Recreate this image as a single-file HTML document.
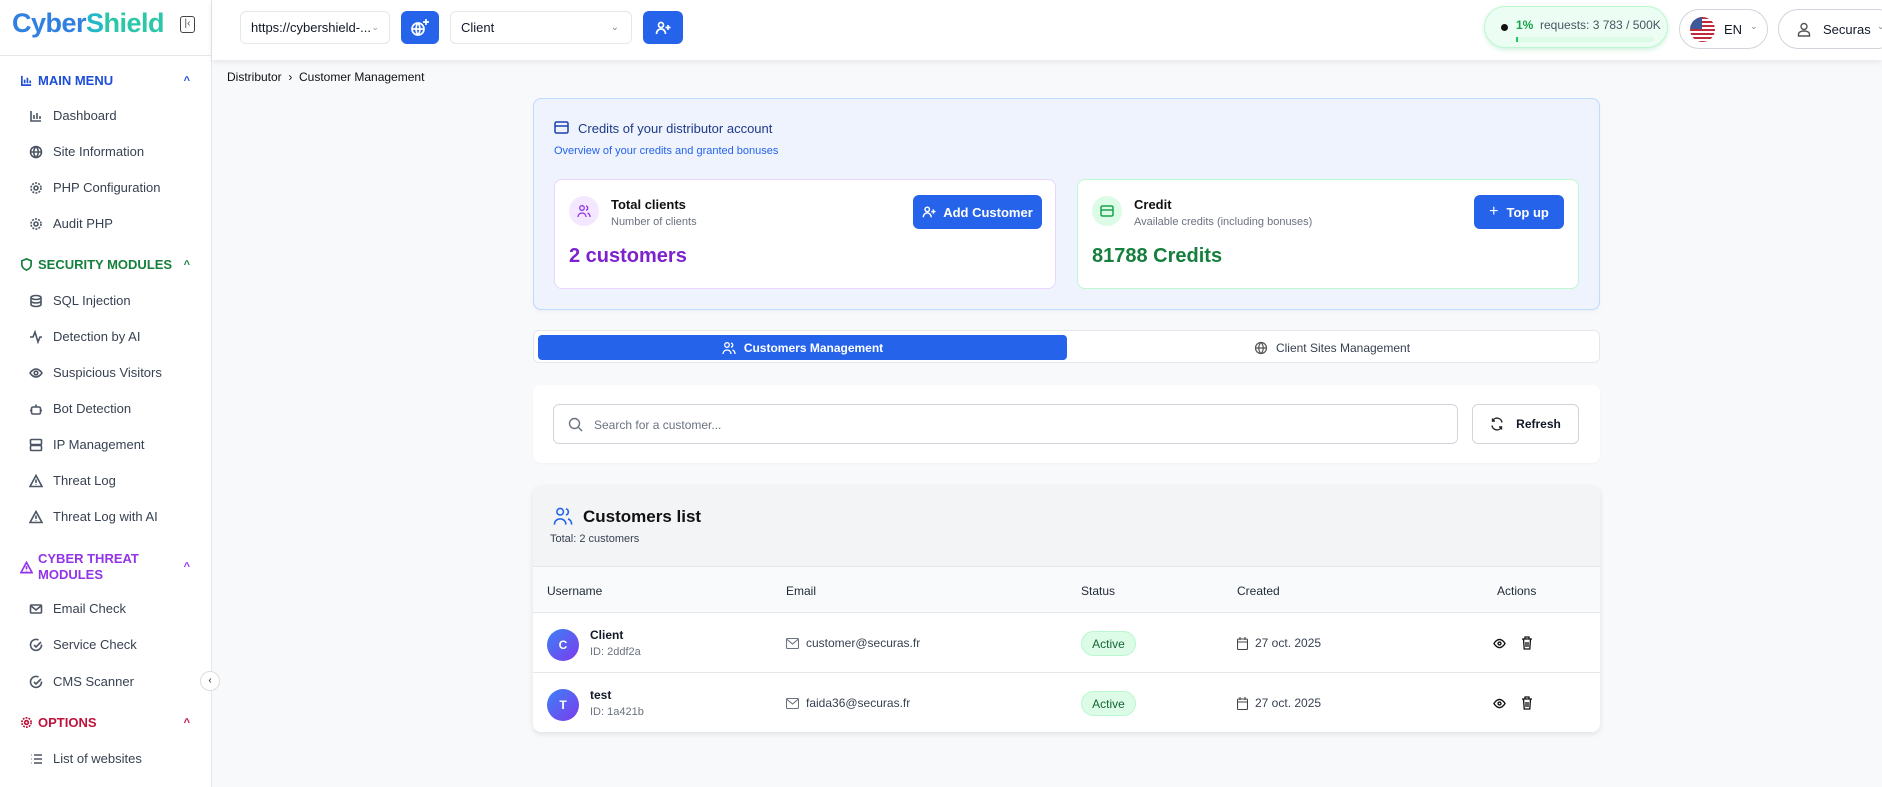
<!DOCTYPE html>
<html><head><meta charset="utf-8"><style>
*{box-sizing:border-box;margin:0;padding:0}
body{width:1882px;height:787px;overflow:hidden;background:#f8f9fb;font-family:"Liberation Sans",sans-serif;color:#111827;position:relative;font-size:13px}
.abs{position:absolute}
.side{left:0;top:0;width:212px;height:787px;background:#fff;border-right:1px solid #e5e7eb}
.si{position:absolute;left:29px;font-size:13px;color:#374151;display:flex;align-items:center}
.si svg{width:14px;height:14px;margin-right:10px;stroke:#4b5563;fill:none;stroke-width:1.6}
.sh{position:absolute;left:20px;font-size:13px;font-weight:bold;display:flex;align-items:center;width:170px}
.sh svg{width:13px;height:13px;margin-right:5px;fill:none;stroke-width:1.8}
.sh .car{position:absolute;right:0;font-size:11px}
.top{left:212px;top:0;width:1670px;height:60px;background:#fff;box-shadow:0 2px 6px rgba(0,0,0,.08)}
.sel{position:absolute;border:1px solid #e5e7eb;border-radius:6px;background:#fff;font-size:13px;display:flex;align-items:center;padding-left:10px}
.btn{position:absolute;background:#2563eb;border-radius:6px;color:#fff;display:flex;align-items:center;justify-content:center;font-weight:bold;font-size:13px}
.btn svg{stroke:#fff;fill:none;stroke-width:1.7}
.card{position:absolute;background:#fff;border-radius:8px}
.th{position:absolute;top:584px;font-size:12px;color:#1f2937}
.row{position:absolute;left:533px;width:1067px;height:60px;border-top:1px solid #e5e7eb}
.av{position:absolute;left:14px;top:16px;width:32px;height:32px;border-radius:50%;background:linear-gradient(135deg,#3b82f6,#7c3aed);color:#fff;font-weight:bold;font-size:12px;display:flex;align-items:center;justify-content:center}
.badge{position:absolute;left:548px;top:18px;width:55px;height:25px;border-radius:13px;background:#dcfce7;border:1px solid #bbf7d0;color:#166534;font-size:12px;display:flex;align-items:center;justify-content:center}
</style></head><body>

<div class="abs side">
 <div class="abs" style="left:12px;top:8px;font-size:27px;font-weight:bold;letter-spacing:-0.5px"><span style="color:#2f80e0">Cyber</span><span style="color:#22b8c8">S</span><span style="color:#2cc7a8">hield</span></div>
 <div class="abs" style="left:180px;top:16px;width:15px;height:17px;border:1.5px solid #444;border-radius:3px;font-size:10px;line-height:13px;text-align:center;color:#444">|‹</div>
 <div class="abs" style="left:0;top:55px;width:212px;border-top:1px solid #e5e7eb"></div>

 <div class="sh" style="top:73px;color:#1d4ed8"><svg viewBox="0 0 14 14" stroke="#1d4ed8"><path d="M2 2v10h10M5 10V6M8 10V4M11 10V7"/></svg>MAIN MENU<span class="car">^</span></div>
 <div class="si" style="top:108px"><svg viewBox="0 0 14 14"><path d="M2 2v10h10M5 10V6M8 10V4M11 10V7"/></svg>Dashboard</div>
 <div class="si" style="top:144px"><svg viewBox="0 0 14 14"><circle cx="7" cy="7" r="5.5"/><path d="M1.5 7h11M7 1.5c3 3 3 8 0 11M7 1.5c-3 3-3 8 0 11"/></svg>Site Information</div>
 <div class="si" style="top:180px"><svg viewBox="0 0 14 14"><circle cx="7" cy="7" r="2"/><circle cx="7" cy="7" r="5" stroke-dasharray="2 1.2"/></svg>PHP Configuration</div>
 <div class="si" style="top:216px"><svg viewBox="0 0 14 14"><circle cx="7" cy="7" r="2"/><circle cx="7" cy="7" r="5" stroke-dasharray="2 1.2"/></svg>Audit PHP</div>

 <div class="sh" style="top:257px;color:#15803d"><svg viewBox="0 0 14 14" stroke="#15803d"><path d="M7 1l5 2v4c0 3-2.5 5-5 6-2.5-1-5-3-5-6V3z"/></svg>SECURITY MODULES<span class="car">^</span></div>
 <div class="si" style="top:293px"><svg viewBox="0 0 14 14"><ellipse cx="7" cy="3.5" rx="5" ry="2"/><path d="M2 3.5v7c0 1.1 2.2 2 5 2s5-.9 5-2v-7M2 7c0 1.1 2.2 2 5 2s5-.9 5-2"/></svg>SQL Injection</div>
 <div class="si" style="top:329px"><svg viewBox="0 0 14 14"><path d="M1 7h3l2-5 3 10 2-5h2"/></svg>Detection by AI</div>
 <div class="si" style="top:365px"><svg viewBox="0 0 14 14"><path d="M1 7s2.5-4 6-4 6 4 6 4-2.5 4-6 4-6-4-6-4z"/><circle cx="7" cy="7" r="1.8"/></svg>Suspicious Visitors</div>
 <div class="si" style="top:401px"><svg viewBox="0 0 14 14"><rect x="2.5" y="5" width="9" height="7" rx="1.5"/><path d="M7 5V2.5M1 8.5h1.5M11.5 8.5H13"/></svg>Bot Detection</div>
 <div class="si" style="top:437px"><svg viewBox="0 0 14 14"><rect x="1.5" y="1.5" width="11" height="5" rx="1"/><rect x="1.5" y="7.5" width="11" height="5" rx="1"/></svg>IP Management</div>
 <div class="si" style="top:473px"><svg viewBox="0 0 14 14"><path d="M7 1.5l6 11H1z M7 5.5v3.5M7 10.5v.5"/></svg>Threat Log</div>
 <div class="si" style="top:509px"><svg viewBox="0 0 14 14"><path d="M7 1.5l6 11H1z M7 5.5v3.5M7 10.5v.5"/></svg>Threat Log with AI</div>

 <div class="sh" style="top:551px;color:#9333ea;line-height:16px;align-items:center"><svg viewBox="0 0 14 14" stroke="#9333ea"><path d="M7 1.5l6 11H1z M7 5.5v3.5M7 10.5v.5"/></svg><span>CYBER THREAT<br>MODULES</span><span class="car">^</span></div>
 <div class="si" style="top:601px"><svg viewBox="0 0 14 14"><rect x="1.5" y="3" width="11" height="8" rx="1"/><path d="M1.5 3.5L7 8l5.5-4.5"/></svg>Email Check</div>
 <div class="si" style="top:637px"><svg viewBox="0 0 14 14"><path d="M12.5 6.5A5.5 5.5 0 1 1 9.5 2M5 7l2 2 5-5"/></svg>Service Check</div>
 <div class="si" style="top:674px"><svg viewBox="0 0 14 14"><path d="M12.5 6.5A5.5 5.5 0 1 1 9.5 2M5 7l2 2 5-5"/></svg>CMS Scanner</div>
 <div class="abs" style="left:200px;top:671px;width:20px;height:20px;border-radius:50%;background:#fff;border:1px solid #ddd;font-size:10px;text-align:center;line-height:18px">‹</div>

 <div class="sh" style="top:715px;color:#be123c"><svg viewBox="0 0 14 14" stroke="#be123c"><circle cx="7" cy="7" r="2"/><circle cx="7" cy="7" r="5" stroke-dasharray="2 1.2"/></svg>OPTIONS<span class="car">^</span></div>
 <div class="si" style="top:751px"><svg viewBox="0 0 14 14"><path d="M2 3h.5M2 7h.5M2 11h.5M5 3h8M5 7h8M5 11h8"/></svg>List of websites</div>
</div>

<div class="abs top">
 <div class="sel" style="left:28px;top:11px;width:150px;height:33px">https://cybershield-...<span style="position:absolute;right:10px;color:#999;font-size:9px">⌄</span></div>
 <div class="btn" style="left:189px;top:11px;width:38px;height:33px"><svg width="22" height="20" viewBox="0 0 22 20"><circle cx="9" cy="11" r="6"/><path d="M3 11h12M9 5c2.5 3 2.5 9 0 12M9 5c-2.5 3-2.5 9 0 12M17 1v6M14 4h6"/></svg></div>
 <div class="sel" style="left:238px;top:11px;width:182px;height:33px">Client<span style="position:absolute;right:12px;color:#888;font-size:10px">⌄</span></div>
 <div class="btn" style="left:431px;top:11px;width:40px;height:33px"><svg width="16" height="16" viewBox="0 0 16 16"><circle cx="6" cy="5" r="2.5"/><path d="M1.5 14c0-3 2-5 4.5-5s4.5 2 4.5 5M13 5v5M10.5 7.5h5"/></svg></div>

 <div class="abs" style="left:1272px;top:6px;width:184px;height:42px;border-radius:21px;background:#ecfdf3;border:1px solid #bbf7d0;box-shadow:0 2px 5px rgba(34,197,94,.2)">
  <div class="abs" style="left:16px;top:17px;width:7px;height:7px;border-radius:50%;background:#111"></div>
  <div class="abs" style="left:31px;top:11px;font-size:12px;color:#4b5563"><b style="color:#16a34a">1%</b>&nbsp; requests: 3 783 / 500K</div>
  <div class="abs" style="left:31px;top:30px;width:138px;height:5px;border-radius:3px;background:#dcfce7"><div style="width:2px;height:5px;background:#22c55e"></div></div>
 </div>
 <div class="abs" style="left:1467px;top:9px;width:89px;height:40px;border-radius:20px;border:1px solid #d1d5db;background:#fff">
  <div class="abs" style="left:10px;top:7px;width:25px;height:25px;border-radius:50%;overflow:hidden;background:repeating-linear-gradient(#c0283c 0 2px,#fff 2px 4px)"><div style="width:12px;height:12px;background:#3c5a9a"></div></div>
  <div class="abs" style="left:44px;top:12px;font-size:13px">EN</div>
  <div class="abs" style="left:70px;top:11px;font-size:9px;color:#888">⌄</div>
 </div>
 <div class="abs" style="left:1566px;top:9px;width:120px;height:40px;border-radius:20px;border:1px solid #d1d5db;background:#fff">
  <svg class="abs" style="left:18px;top:12px" width="14" height="15" viewBox="0 0 14 15" fill="none" stroke="#555" stroke-width="1.4"><circle cx="7" cy="4.5" r="3"/><path d="M1.5 14v-1.5c0-2 2-3.5 5.5-3.5s5.5 1.5 5.5 3.5V14z"/></svg>
  <div class="abs" style="left:44px;top:12px;font-size:13px">Securas</div>
  <div class="abs" style="left:98px;top:11px;font-size:9px;color:#888">⌄</div>
 </div>
</div>

<div class="abs" style="left:227px;top:70px;font-size:12px;color:#111">Distributor &nbsp;›&nbsp; Customer Management</div>

<!-- credits card -->
<div class="card" style="left:533px;top:98px;width:1067px;height:212px;background:#eef3fd;border:1px solid #bfdbfe;box-shadow:0 2px 4px rgba(0,0,0,.04)">
 <svg class="abs" style="left:20px;top:22px" width="15" height="13" viewBox="0 0 15 13" fill="none" stroke="#1e40af" stroke-width="1.5"><rect x="1" y="1" width="13" height="11" rx="1.5"/><path d="M1 5h13"/></svg>
 <div class="abs" style="left:44px;top:22px;font-size:13px;color:#1e3a8a">Credits of your distributor account</div>
 <div class="abs" style="left:20px;top:46px;font-size:11px;color:#2563eb">Overview of your credits and granted bonuses</div>
 <div class="card" style="left:20px;top:80px;width:502px;height:110px;border:1px solid #e9d5ff">
  <div class="abs" style="left:14px;top:16px;width:30px;height:30px;border-radius:50%;background:#f3e8ff"><svg style="margin:8px" width="14" height="14" viewBox="0 0 14 14" fill="none" stroke="#9333ea" stroke-width="1.3"><circle cx="5" cy="4" r="2.3"/><path d="M1 13c0-2.5 1.8-4 4-4s4 1.5 4 4M9 2a2.2 2.2 0 0 1 0 4.3M10.5 9c1.5.5 2.5 2 2.5 4"/></svg></div>
  <div class="abs" style="left:56px;top:17px;font-size:13px;font-weight:bold;color:#111">Total clients</div>
  <div class="abs" style="left:56px;top:36px;font-size:11px;color:#6b7280">Number of clients</div>
  <div class="btn" style="left:358px;top:15px;width:129px;height:34px"><svg width="14" height="14" viewBox="0 0 16 16" style="margin-right:7px"><circle cx="6" cy="5" r="2.5"/><path d="M1.5 14c0-3 2-5 4.5-5s4.5 2 4.5 5M13 5v5M10.5 7.5h5"/></svg>Add Customer</div>
  <div class="abs" style="left:14px;top:65px;font-size:20px;font-weight:bold;color:#7e22ce">2 customers</div>
 </div>
 <div class="card" style="left:543px;top:80px;width:502px;height:110px;border:1px solid #bbf7d0">
  <div class="abs" style="left:14px;top:16px;width:30px;height:30px;border-radius:50%;background:#dcfce7"><svg style="margin:8px" width="14" height="14" viewBox="0 0 14 14" fill="none" stroke="#16a34a" stroke-width="1.5"><rect x="1" y="2" width="12" height="10" rx="1.5"/><path d="M1 6h12"/></svg></div>
  <div class="abs" style="left:56px;top:17px;font-size:13px;font-weight:bold;color:#111">Credit</div>
  <div class="abs" style="left:56px;top:36px;font-size:11px;color:#6b7280">Available credits (including bonuses)</div>
  <div class="btn" style="left:396px;top:15px;width:90px;height:34px"><span style="font-weight:normal;font-size:16px;margin-right:8px">+</span>Top up</div>
  <div class="abs" style="left:14px;top:65px;font-size:20px;font-weight:bold;color:#15803d">81788 Credits</div>
 </div>
</div>

<!-- tabs -->
<div class="card" style="left:533px;top:330px;width:1067px;height:33px;border:1px solid #e5e7eb;border-radius:6px">
 <div class="abs" style="left:4px;top:4px;width:529px;height:25px;background:#2563eb;border-radius:4px;color:#fff;font-size:12px;font-weight:bold;display:flex;align-items:center;justify-content:center"><svg width="14" height="14" viewBox="0 0 14 14" fill="none" stroke="#fff" stroke-width="1.3" style="margin-right:8px"><circle cx="5" cy="4" r="2.3"/><path d="M1 13c0-2.5 1.8-4 4-4s4 1.5 4 4M9 2a2.2 2.2 0 0 1 0 4.3M10.5 9c1.5.5 2.5 2 2.5 4"/></svg>Customers Management</div>
 <div class="abs" style="left:533px;top:4px;width:530px;height:25px;color:#374151;font-size:12px;display:flex;align-items:center;justify-content:center"><svg width="14" height="14" viewBox="0 0 14 14" fill="none" stroke="#555" stroke-width="1.2" style="margin-right:8px"><circle cx="7" cy="7" r="5.5"/><path d="M1.5 7h11M7 1.5c3 3 3 8 0 11M7 1.5c-3 3-3 8 0 11"/></svg>Client Sites Management</div>
</div>

<!-- search -->
<div class="card" style="left:533px;top:385px;width:1067px;height:78px;box-shadow:0 1px 2px rgba(0,0,0,.03)">
 <div class="abs" style="left:20px;top:19px;width:905px;height:40px;border:1px solid #d1d5db;border-radius:6px">
  <svg class="abs" style="left:14px;top:12px" width="15" height="15" viewBox="0 0 15 15" fill="none" stroke="#6b7280" stroke-width="1.4"><circle cx="6.5" cy="6.5" r="5"/><path d="M10.5 10.5l3.5 3.5"/></svg>
  <div class="abs" style="left:40px;top:13px;font-size:12px;color:#6b7280">Search for a customer...</div>
 </div>
 <div class="abs" style="left:939px;top:19px;width:107px;height:40px;border:1px solid #d1d5db;border-radius:6px;display:flex;align-items:center;justify-content:center;font-size:12px;font-weight:bold"><svg width="14" height="14" viewBox="0 0 14 14" fill="none" stroke="#222" stroke-width="1.4" style="margin-right:12px"><path d="M12 5.5A5 5 0 0 0 2.5 4M2 8.5A5 5 0 0 0 11.5 10M2.5 1.5V4H5M11.5 12.5V10H9"/></svg>Refresh</div>
</div>

<!-- list -->
<div class="card" style="left:533px;top:486px;width:1067px;height:246px;box-shadow:0 2px 6px rgba(0,0,0,.1);overflow:hidden">
 <div class="abs" style="left:0;top:0;width:1067px;height:80px;background:#f3f4f6"></div>
 <svg class="abs" style="left:20px;top:20px" width="20" height="20" viewBox="0 0 14 14" fill="none" stroke="#2563eb" stroke-width="1.1"><circle cx="5" cy="4" r="2.3"/><path d="M1 13c0-2.5 1.8-4 4-4s4 1.5 4 4M9 2a2.2 2.2 0 0 1 0 4.3M10.5 9c1.5.5 2.5 2 2.5 4"/></svg>
 <div class="abs" style="left:50px;top:21px;font-size:17px;font-weight:bold;color:#111">Customers list</div>
 <div class="abs" style="left:17px;top:47px;font-size:11px;color:#374151">Total: 2 customers</div>
 <div class="abs" style="left:0;top:80px;width:1067px;height:46px;background:#f9fafb;border-top:1px solid #e5e7eb"></div>
</div>
<div class="th" style="left:547px">Username</div>
<div class="th" style="left:786px">Email</div>
<div class="th" style="left:1081px">Status</div>
<div class="th" style="left:1237px">Created</div>
<div class="th" style="left:1497px">Actions</div>

<div class="row" style="top:612px">
 <div class="av">C</div>
 <div class="abs" style="left:57px;top:15px;font-size:12px;font-weight:bold">Client</div>
 <div class="abs" style="left:57px;top:33px;font-size:11px;color:#6b7280">ID: 2ddf2a</div>
 <svg class="abs" style="left:253px;top:25px" width="13" height="11" viewBox="0 0 13 11" fill="none" stroke="#6b7280" stroke-width="1.1"><rect x=".5" y=".5" width="12" height="10" rx="1"/><path d="M.5 1l6 5 6-5"/></svg>
 <div class="abs" style="left:273px;top:23px;font-size:12px;color:#374151">customer@securas.fr</div>
 <div class="badge">Active</div>
 <svg class="abs" style="left:704px;top:24px" width="11" height="13" viewBox="0 0 11 13" fill="none" stroke="#444" stroke-width="1.1"><rect x=".5" y="2" width="10" height="10.5" rx="1"/><path d="M3 0v3M8 0v3M.5 5h10"/></svg>
 <div class="abs" style="left:722px;top:23px;font-size:12px;color:#374151">27 oct. 2025</div>
 <svg class="abs" style="left:960px;top:25px" width="13" height="11" viewBox="0 0 14 12" fill="none" stroke="#111" stroke-width="1.5"><path d="M1 6s2.5-4.5 6-4.5S13 6 13 6s-2.5 4.5-6 4.5S1 6 1 6z"/><circle cx="7" cy="6" r="1.6"/></svg>
 <svg class="abs" style="left:988px;top:23px" width="12" height="14" viewBox="0 0 12 14" fill="none" stroke="#111" stroke-width="1.3"><path d="M1 3h10M4 3V1h4v2M2.5 3l.7 10h5.6l.7-10M5 6v5M7 6v5"/></svg>
</div>
<div class="row" style="top:672px">
 <div class="av">T</div>
 <div class="abs" style="left:57px;top:15px;font-size:12px;font-weight:bold">test</div>
 <div class="abs" style="left:57px;top:33px;font-size:11px;color:#6b7280">ID: 1a421b</div>
 <svg class="abs" style="left:253px;top:25px" width="13" height="11" viewBox="0 0 13 11" fill="none" stroke="#6b7280" stroke-width="1.1"><rect x=".5" y=".5" width="12" height="10" rx="1"/><path d="M.5 1l6 5 6-5"/></svg>
 <div class="abs" style="left:273px;top:23px;font-size:12px;color:#374151">faida36@securas.fr</div>
 <div class="badge">Active</div>
 <svg class="abs" style="left:704px;top:24px" width="11" height="13" viewBox="0 0 11 13" fill="none" stroke="#444" stroke-width="1.1"><rect x=".5" y="2" width="10" height="10.5" rx="1"/><path d="M3 0v3M8 0v3M.5 5h10"/></svg>
 <div class="abs" style="left:722px;top:23px;font-size:12px;color:#374151">27 oct. 2025</div>
 <svg class="abs" style="left:960px;top:25px" width="13" height="11" viewBox="0 0 14 12" fill="none" stroke="#111" stroke-width="1.5"><path d="M1 6s2.5-4.5 6-4.5S13 6 13 6s-2.5 4.5-6 4.5S1 6 1 6z"/><circle cx="7" cy="6" r="1.6"/></svg>
 <svg class="abs" style="left:988px;top:23px" width="12" height="14" viewBox="0 0 12 14" fill="none" stroke="#111" stroke-width="1.3"><path d="M1 3h10M4 3V1h4v2M2.5 3l.7 10h5.6l.7-10M5 6v5M7 6v5"/></svg>
</div>
</body></html>
